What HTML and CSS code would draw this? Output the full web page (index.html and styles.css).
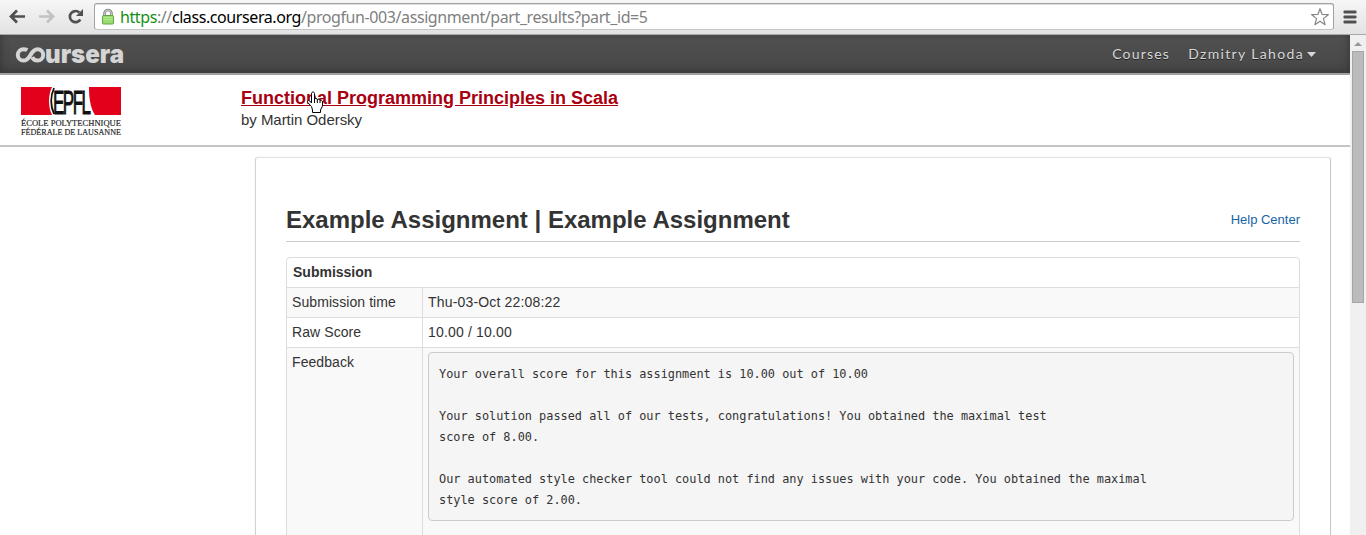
FILE: index.html
```html
<!DOCTYPE html>
<html lang="en">
<head>
<meta charset="utf-8">
<title>Example Assignment | Coursera</title>
<link rel="stylesheet" href="styles.css">
</head>
<body>
<div class="toolbar">
  <svg class="nav-icons" width="94" height="34" viewBox="0 0 94 34" fill="none">
    <path d="M25 16.500H12M17 10.500l-6 6 6 6" stroke="#505050" stroke-width="2.700"/>
    <path d="M39 16.500h13M47 10.500l6 6-6 6" stroke="#c2c2c2" stroke-width="2.700"/>
    <path d="M80.300 19.500a5.600 5.600 0 1 1-1-7" stroke="#505050" stroke-width="2.700"/>
    <path d="M83 9v7h-7z" fill="#505050"/>
  </svg>
  <div class="omnibox">
    <svg class="lock" width="14" height="18" viewBox="0 0 14 18">
      <path d="M3.500 9V5.500a3.500 3.500 0 0 1 7 0V9" fill="none" stroke="#888" stroke-width="2.600"/>
      <path d="M3.500 9V5.500a3.500 3.500 0 0 1 7 0V9" fill="none" stroke="#ddd" stroke-width=".8"/>
      <rect x="1.500" y="7.500" width="11" height="8.500" rx=".8" fill="#9bdc70" stroke="#62a443"/>
      <path d="M2.500 9.500h9M2.500 11.500h9" stroke="#b5ea91" stroke-width=".8"/>
    </svg>
    <div class="url"><span class="scheme">https</span>://<span class="host">class.coursera.org</span>/progfun-003/assignment/part_results?part_id=5</div>
    <svg class="star" width="20" height="20" viewBox="0 0 20 20">
      <path d="M10 1.700l2.100 5.800 6.200.2-4.900 3.900 1.700 6.100-5.100-3.500-5.100 3.500 1.700-6.100-4.900-3.900 6.200-.2z" fill="#fff" stroke="#858585" stroke-width="1.200" stroke-linejoin="round"/>
    </svg>
  </div>
  <svg class="menu" width="14" height="14" viewBox="0 0 14 14">
    <g fill="#505050"><rect x=".5" y=".5" width="13" height="3" rx="1"/><rect x=".5" y="5.500" width="13" height="3" rx="1"/><rect x=".5" y="10.500" width="13" height="3" rx="1"/></g>
  </svg>
</div>
<div class="viewport">
  <div class="page">
    <nav class="topbar">
      <svg class="brand" width="112" height="26" viewBox="0 0 112 26">
        <path d="M12.300 6.100C11.300 5.500 10 5.200 8.500 5.200a5.700 5.700 0 0 0 0 11.400C16 16.600 15 5.200 22.500 5.200a5.700 5.700 0 0 1 0 11.400c-2.400 0-4.300-1.200-5.300-3.400" fill="none" stroke="#d5d5d5" stroke-width="4"/>
        <text class="brand-text" x="30" y="18.500" textLength="79" lengthAdjust="spacingAndGlyphs">ursera</text>
      </svg>
      <div class="links"><a class="courses">Courses</a><a class="user">Dzmitry Lahoda</a><span class="caret"></span></div>
    </nav>
    <header class="course">
      <svg class="school" width="104" height="54" viewBox="0 0 104 54">
        <path d="M1 1h31c-4 8-4 20 0 28H1zM69 1h32v28H75c-5-8-6-18-6-28z" fill="#e2001a"/>
        <text class="epfl" transform="translate(33 28) scale(.5 1)" textLength="76" lengthAdjust="spacing">EPFL</text>
        <path d="M34 2c-3.500 8-3.500 18 0 26" fill="none" stroke="#111" stroke-width="1.800"/>
        <text class="school-name" x="1" y="40" textLength="100" lengthAdjust="spacingAndGlyphs">ÉCOLE POLYTECHNIQUE</text>
        <text class="school-name" x="1" y="49" textLength="100" lengthAdjust="spacingAndGlyphs">FÉDÉRALE DE LAUSANNE</text>
      </svg>
      <div class="course-info">
        <a class="course-title">Functional Programming Principles in Scala</a>
        <div class="author">by Martin Odersky</div>
        <svg class="cursor" width="18" height="23" viewBox="0 0 18 23">
          <path d="M5.500 15.500L1.800 11.500c-1-1.500.6-2.700 2-1.500L5.500 12V2.500c0-2 3-2 3 0V8c.5-1 2.700-.8 2.800.6.700-.8 2.500-.5 2.700.8 1-.6 2.500 0 2.500 1.600v4l-2 4v2.500h-8V19z" fill="#fff" stroke="#000"/>
          <path d="M8.500 8v4M11.300 8.600V12M14 9.400V12" stroke="#000"/>
        </svg>
      </div>
    </header>
    <main class="card">
      <div class="heading"><h1>Example Assignment | Example Assignment</h1><a class="help">Help Center</a></div>
      <div class="results">
        <div class="row head">Submission</div>
        <div class="row odd"><div class="key">Submission time</div><div class="value">Thu-03-Oct 22:08:22</div></div>
        <div class="row"><div class="key">Raw Score</div><div class="value">10.00 / 10.00</div></div>
        <div class="row odd feedback"><div class="key">Feedback</div><div class="value"><pre>Your overall score for this assignment is 10.00 out of 10.00

Your solution passed all of our tests, congratulations! You obtained the maximal test
score of 8.00.

Our automated style checker tool could not find any issues with your code. You obtained the maximal
style score of 2.00.</pre></div></div>
      </div>
    </main>
  </div>
  <div class="scrollbar"><div class="arrow"></div><div class="thumb"></div></div>
</div>
</body>
</html>
```
FILE: styles.css
```css
* { box-sizing: border-box; }
body { margin: 0; height: 535px; overflow: hidden; background: #fff; color: #333; font: 14px/20px "Liberation Sans", Arial, sans-serif; }
.toolbar { display: flex; height: 35px; background: linear-gradient(#f6f6f6, #e3e3e3); border-bottom: 1px solid #a9a9a9; }
.nav-icons { flex: none; }
.omnibox { display: flex; align-items: center; width: 1240px; height: 27px; margin-top: 3px; border: 1px solid #a3a3a3; border-bottom-color: #c4c4c4; border-radius: 3px; background: #fff; box-shadow: inset 0 1px #dedede; }
.lock { margin-left: 6px; flex: none; }
.url { margin-left: 5px; flex: 1; white-space: nowrap; color: #808080; font: 16px/24px "Noto Sans", sans-serif; letter-spacing: -.41px; }
.scheme { color: #149014; }
.host { color: #000; }
.star { margin-right: 3px; flex: none; }
.menu { margin: 10px 0 0 9px; }
.viewport { display: flex; height: 500px; }
.page { width: 1350px; overflow: hidden; }
.topbar { display: flex; justify-content: space-between; height: 40px; background: linear-gradient(#505050, #4a4a4a 70%, #414141 95%); border-bottom: 2px solid #a0a0a0; box-shadow: inset 6px 0 8px -6px #333, inset -6px 0 8px -6px #333; }
.brand { margin: 9px 0 0 15px; overflow: visible; }
.brand-text { font: 900 26px Inter, sans-serif; fill: #d5d5d5; }
.links { display: flex; padding: 9px 34px 0 0; color: #d8d8d8; font: 14px/20px Lato, sans-serif; letter-spacing: 1.2px; text-shadow: 0 1px #222; }
.courses { margin-right: 18px; }
.user { letter-spacing: 1.35px; }
.caret { margin: 8px 0 0 3px; width: 9px; height: 5px; background: #d8d8d8; clip-path: polygon(0 0, 100% 0, 50% 100%); }
.course { display: flex; height: 72px; border-bottom: 2px solid #c4c4c4; }
.school { margin: 11px 0 0 20px; overflow: visible; }
.epfl { font: 36px "Liberation Sans", sans-serif; font-size: 34px; fill: #111; stroke: #111; stroke-width: 1px; }
.school-name { font: 8.2px "Liberation Serif", serif; fill: #222; stroke: #222; stroke-width: .15px; }
.course-info { position: relative; margin-left: 117px; padding-top: 12px; }
.course-title { display: block; color: #a80010; font-size: 18px; line-height: 22px; font-weight: bold; text-decoration: underline; }
.author { margin-top: 1px; font-size: 15px; line-height: 20px; letter-spacing: -.04px; }
.cursor { position: absolute; left: 65px; top: 16px; fill: none; }
.card { width: 1076px; height: 440px; margin: 10px 0 0 255px; padding: 44px 30px 0; border: 1px solid #e2e2e2; border-left-color: #d2d2d2; border-right-color: #c9c9c9; border-radius: 3px; box-shadow: 0 0 1px #ccc; }
.heading { display: flex; justify-content: space-between; height: 40px; border-bottom: 1px solid #ccc; }
h1 { margin: 0; font-size: 24px; line-height: 36px; }
.help { color: #1763a6; font-size: 13px; line-height: 36px; }
.results { margin-top: 15px; border: 1px solid #ddd; border-radius: 4px; overflow: hidden; }
.row { display: flex; height: 30px; border-bottom: 1px solid #ddd; }
.head { padding: 4px 6px; font-weight: bold; }
.odd { background: #f9f9f9; }
.key { width: 136px; padding: 4px 5px; border-right: 1px solid #ddd; letter-spacing: .08px; }
.value { flex: 1; padding: 4px 5px; letter-spacing: .17px; }
.feedback { height: 230px; }
pre { margin: 0; height: 169px; padding: 11px 10px; border: 1px solid #ccc; border-radius: 4px; background: #f5f5f5; font: 11.88px/21px "DejaVu Sans Mono", monospace; letter-spacing: 0; }
.scrollbar { width: 16px; background: #f0f0f0; }
.arrow { width: 8px; height: 4px; margin: 7px 0 5px 4px; background: #999; clip-path: polygon(50% 0, 100% 100%, 0 100%); }
.thumb { width: 12px; height: 252px; margin-left: 2px; border: 1px solid #a6a6a6; background: #bbb; }
```
